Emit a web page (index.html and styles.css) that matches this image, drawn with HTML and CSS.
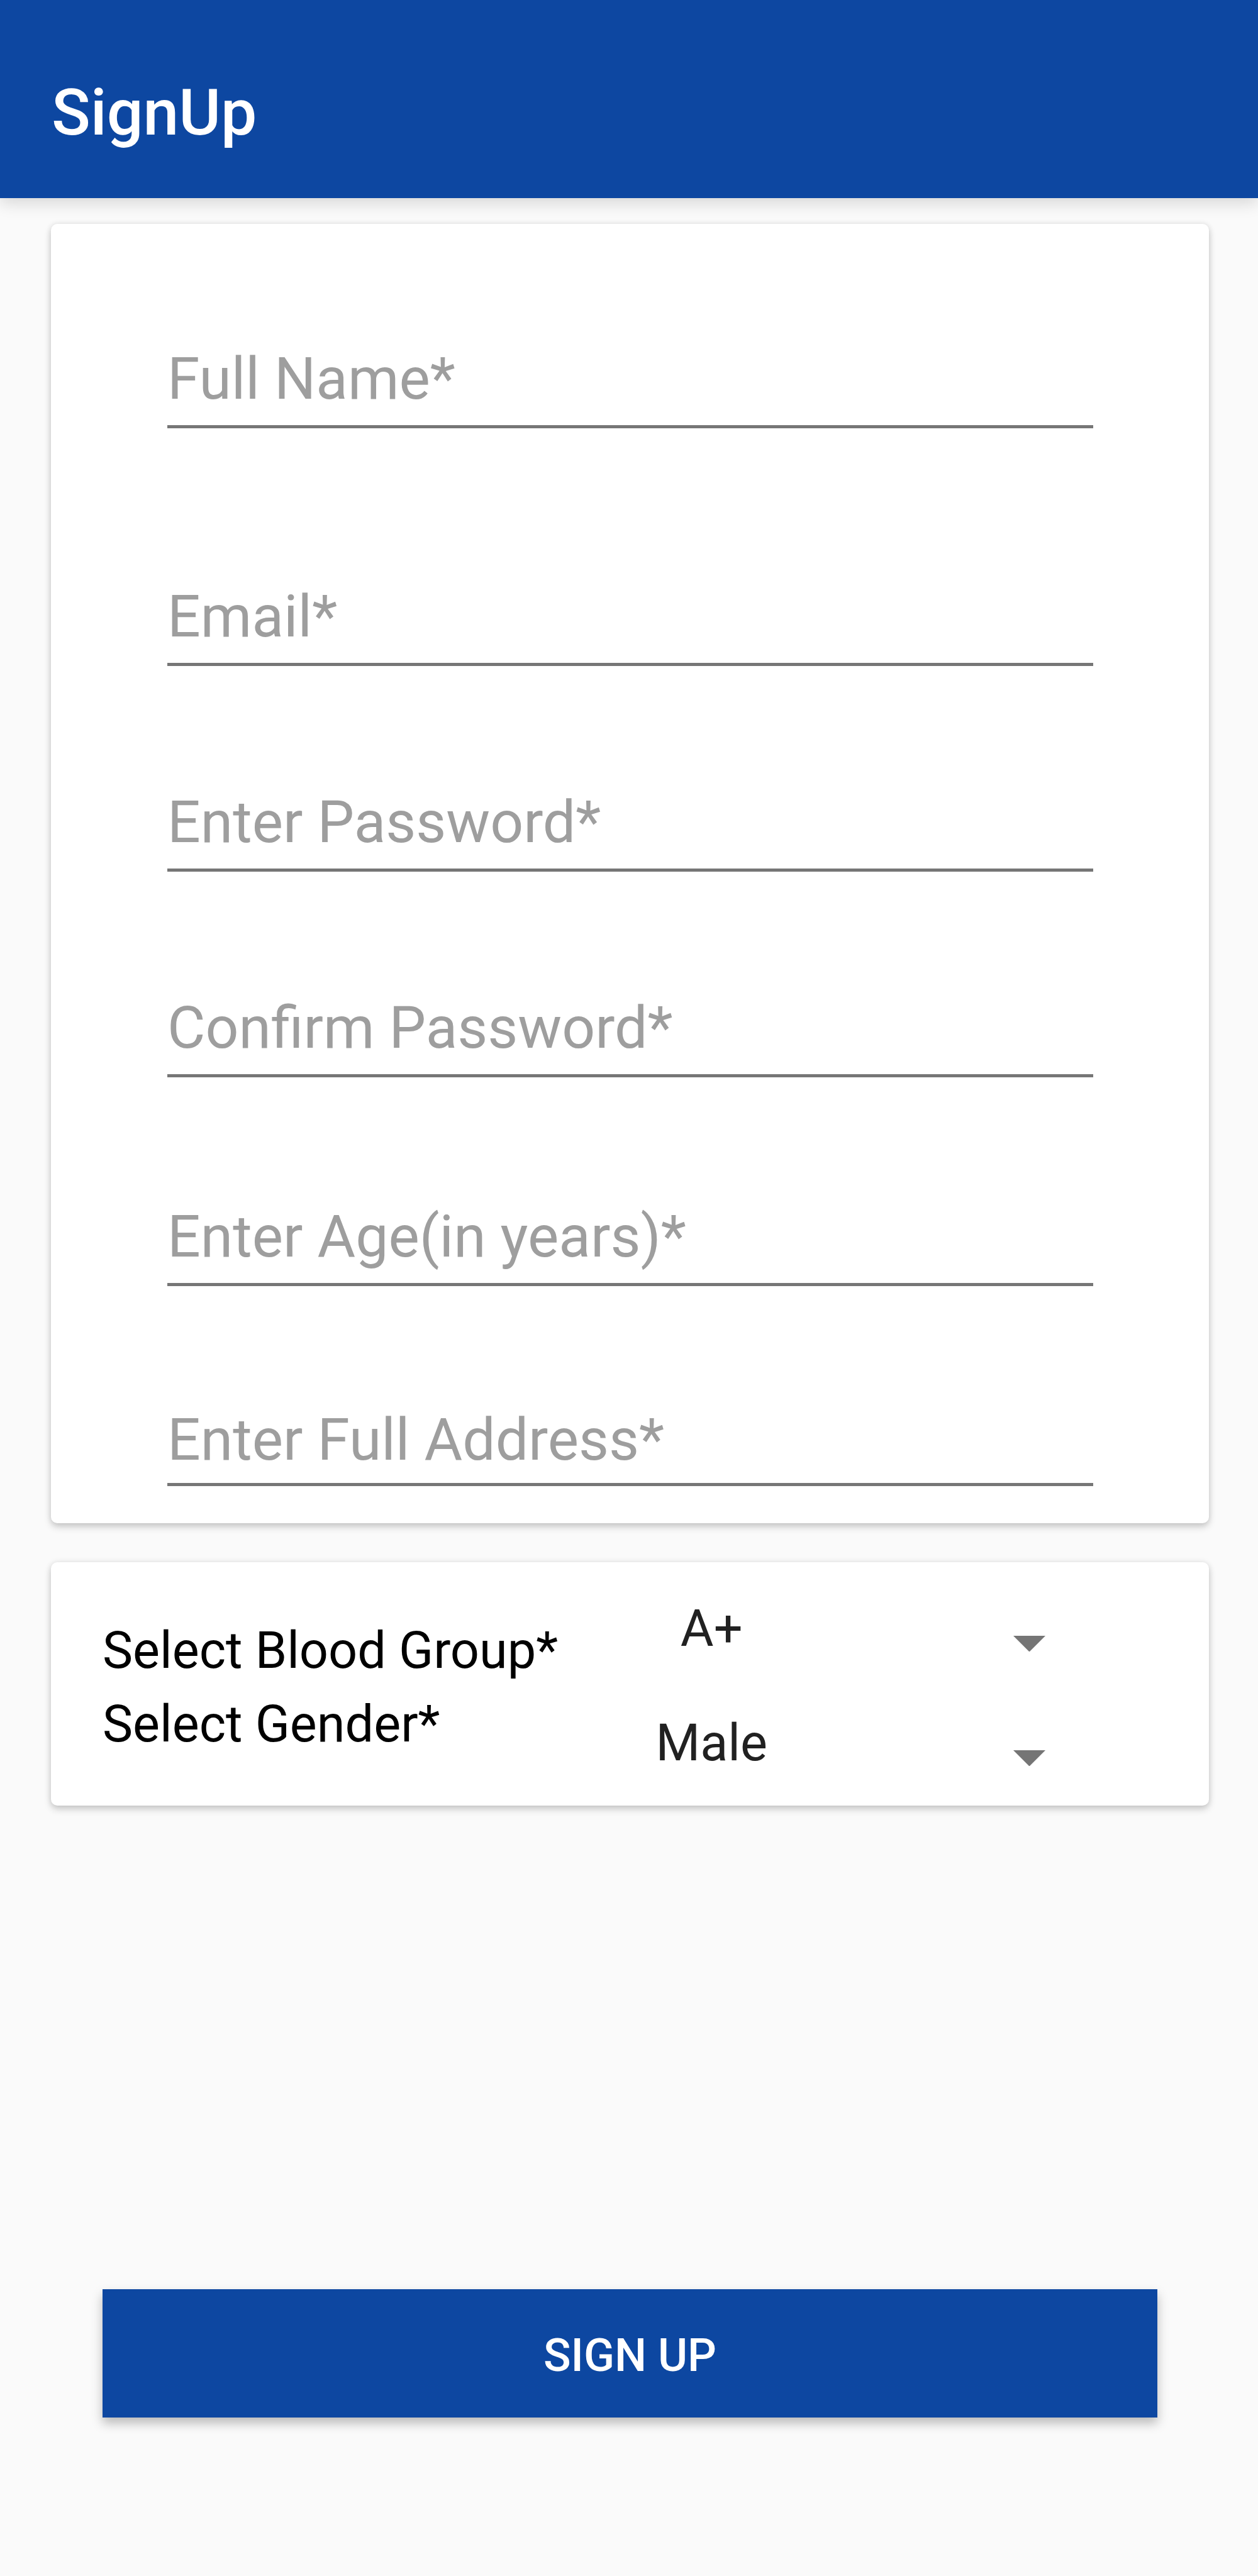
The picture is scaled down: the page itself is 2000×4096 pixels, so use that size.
FILE: index.html
```html
<!DOCTYPE html>
<html lang="en">
<head>
<meta charset="utf-8">
<meta name="viewport" content="width=device-width, initial-scale=1">
<title>SignUp</title>
<link rel="stylesheet" href="styles.css">
</head>
<body>
<header class="app-bar">
  <h1 class="app-title">SignUp</h1>
</header>
<form class="signup">
  <section class="card details">
    <input class="field" type="text" name="name" placeholder="Full Name*" aria-label="Full Name">
    <input class="field field-email" type="email" name="email" placeholder="Email*" aria-label="Email">
    <input class="field" type="password" name="password" placeholder="Enter Password*" aria-label="Enter Password">
    <input class="field" type="password" name="confirm" placeholder="Confirm Password*" aria-label="Confirm Password">
    <input class="field field-age" type="text" inputmode="numeric" name="age" placeholder="Enter Age(in years)*" aria-label="Enter Age in years">
    <input class="field field-address" type="text" name="address" placeholder="Enter Full Address*" aria-label="Enter Full Address">
  </section>
  <section class="card choices">
    <div class="labels">
      <label class="label" for="blood">Select Blood Group*</label>
      <label class="label" for="gender">Select Gender*</label>
    </div>
    <div class="spinners">
      <div class="spinner">
        <select class="select" id="blood" name="blood">
          <option>A+</option><option>A-</option><option>B+</option><option>B-</option>
          <option>AB+</option><option>AB-</option><option>O+</option><option>O-</option>
        </select>
        <svg class="arrow" viewBox="0 0 10 5" aria-hidden="true"><path d="M0 0h10L5 5z"/></svg>
      </div>
      <div class="spinner">
        <select class="select" id="gender" name="gender">
          <option>Male</option><option>Female</option><option>Other</option>
        </select>
        <svg class="arrow" viewBox="0 0 10 5" aria-hidden="true"><path d="M0 0h10L5 5z"/></svg>
      </div>
    </div>
  </section>
  <button class="submit" type="submit">SIGN UP</button>
</form>
</body>
</html>
```
FILE: styles.css
```css
* {
  box-sizing: border-box;
}

body {
  margin: 0;
  min-height: 100vh;
  display: flex;
  flex-direction: column;
  background: #fafafa;
  color: #000;
  font-family: Roboto, "Noto Sans", sans-serif;
}

.app-bar {
  padding: 119px 82px 76px;
  background: #0d47a1;
  box-shadow: 0 8px 24px rgba(0, 0, 0, 0.14);
}

.app-title {
  margin: 0;
  color: #fff;
  font-size: 102px;
  font-weight: 500;
  line-height: 120px;
}

.signup {
  flex: 1;
  display: flex;
  flex-direction: column;
  padding: 41px 78px 252px 81px;
}

.card {
  background: #fff;
  border-radius: 10px;
  box-shadow: 0 6px 12px rgba(0, 0, 0, 0.18), 0 0 10px rgba(0, 0, 0, 0.1);
}

.details {
  display: flex;
  flex-direction: column;
  padding: 192px 184px 59px 185px;
}

.field {
  width: 100%;
  height: 133px;
  margin: 194px 0 0;
  padding: 0 0 20px;
  border: 0;
  border-bottom: 5px solid #767676;
  border-radius: 0;
  outline: 0;
  background: transparent;
  color: #212121;
  font-family: inherit;
  font-size: 93px;
  line-height: 108px;
}

.field:first-child {
  margin-top: 0;
}

.field-email {
  margin-top: 245px;
}

.field-age {
  margin-top: 199px;
}

.field-address {
  height: 128px;
  margin-top: 190px;
  padding-bottom: 15px;
}

.field::placeholder {
  color: #9e9e9e;
  opacity: 1;
}

.choices {
  display: grid;
  grid-template-columns: 1fr 1fr;
  margin-top: 62px;
  padding: 14px 0 9px 82px;
}

.labels {
  display: flex;
  flex-direction: column;
  padding-top: 68px;
}

.label {
  font-size: 81px;
  line-height: 117px;
}

.spinner {
  display: grid;
  grid-template-columns: 260px 1fr 51px 260px;
  align-items: center;
  height: 182px;
}

.select {
  grid-area: 1 / 1 / 2 / 4;
  width: 100%;
  height: 122px;
  margin: 0;
  padding: 0 442px 0 0;
  border: 0;
  outline: 0;
  appearance: none;
  background: transparent;
  color: #212121;
  font-family: inherit;
  font-size: 81px;
  text-align: center;
  text-align-last: center;
}

.arrow {
  grid-area: 1 / 3 / 2 / 4;
  width: 100%;
  margin-top: 49px;
  fill: #757575;
  pointer-events: none;
}

.submit {
  height: 204px;
  margin: auto 82px 0;
  padding: 6px 0 0;
  border: 0;
  background: #0d47a1;
  box-shadow: 0 9px 16px rgba(0, 0, 0, 0.26);
  color: #fff;
  font-family: inherit;
  font-size: 72px;
  font-weight: 500;
}
```
